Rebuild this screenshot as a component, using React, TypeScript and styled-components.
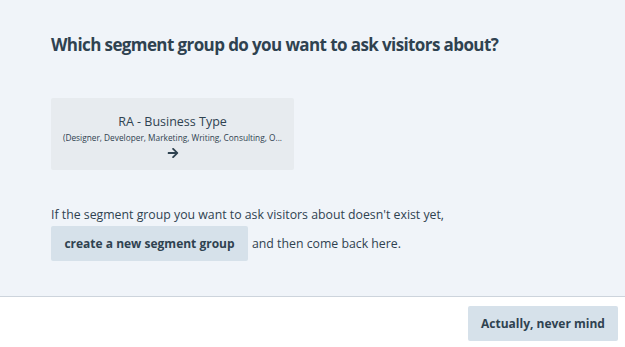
import styled, { createGlobalStyle } from "styled-components";
import { FaArrowRight } from "react-icons/fa";

const GlobalStyle = createGlobalStyle`
    html, body {
        margin: 0;
        padding: 0;
        background: #ffffff;
    }
    body {
        font-family: "Open Sans", "Liberation Sans", sans-serif;
        color: #2f4250;
    }
`

const Modal = styled.div`
    width: 625px;
    height: 347px;
    display: flex;
    flex-direction: column;
`

const Body = styled.div`
    flex: 1;
    background: #f0f4f9;
    border-bottom: 1px solid #cdd4dc;
    padding: 33px 51px 0;
`

const Title = styled.h1`
    margin: 0;
    font-size: 17px;
    font-weight: 700;
    color: #2f4250;
    letter-spacing: -0.6px;
`

const Card = styled.button`
    margin-top: 42px;
    width: 243px;
    height: 72px;
    border: none;
    border-radius: 2px;
    background: #e7ebef;
    display: flex;
    flex-direction: column;
    align-items: center;
    justify-content: center;
    gap: 2px;
    padding: 4px 0 0;
    font-family: inherit;
    color: #2f4250;
    cursor: pointer;
`

const CardTitle = styled.div`
    font-size: 12.5px;
`

const CardSub = styled.div`
    font-size: 8.3px;
    white-space: nowrap;
`

const Arrow = styled.div`
    font-size: 12px;
    margin-top: 2px;
    color: #2f4250;
    display: flex;
`

const Hint = styled.p`
    margin: 36px 0 0;
    font-size: 12.3px;
`

const Row = styled.div`
    display: flex;
    align-items: center;
    gap: 4px;
    margin-top: 3px;
    font-size: 12.3px;
`

const Button = styled.button<{ $w: number }>`
    width: ${p => p.$w}px;
    height: 35px;
    border: none;
    border-radius: 2px;
    background: #d6e1ea;
    font-family: inherit;
    font-size: 12px;
    font-weight: 700;
    color: #2f4250;
    cursor: pointer;
`

const Footer = styled.div`
    height: 50px;
    display: flex;
    justify-content: flex-end;
    align-items: flex-start;
    padding: 9px 7px 0 0;
    box-sizing: border-box;
`

export default function App() {
    return (
        <Modal>
            <GlobalStyle />
            <Body>
                <Title>Which segment group do you want to ask visitors about?</Title>
                <Card>
                    <CardTitle>RA - Business Type</CardTitle>
                    <CardSub>(Designer, Developer, Marketing, Writing, Consulting, O...</CardSub>
                    <Arrow><FaArrowRight /></Arrow>
                </Card>
                <Hint>If the segment group you want to ask visitors about doesn't exist yet,</Hint>
                <Row>
                    <Button $w={197}>create a new segment group</Button>
                    <span>and then come back here.</span>
                </Row>
            </Body>
            <Footer>
                <Button $w={150}>Actually, never mind</Button>
            </Footer>
        </Modal>
    )
}
